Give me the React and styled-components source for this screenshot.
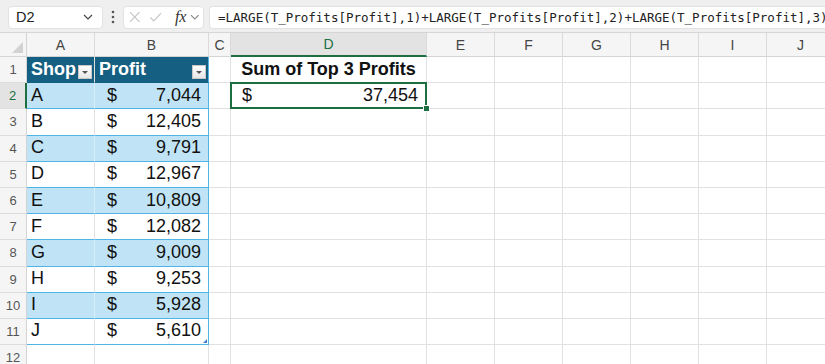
import React from "react";
import styled, { createGlobalStyle, css } from "styled-components";

const GlobalStyle = createGlobalStyle`
  html, body {
    margin: 0;
    padding: 0;
    background: #ffffff;
    overflow: hidden;
  }
  body {
    font-family: "Liberation Sans", Arial, sans-serif;
  }
`;

const GREEN = "#1d6f42";
const BLUE_LINE = "#4fb5e6";
const BAND = "#c0e4f5";
const HEAD = "#156082";
const GRID = "#e1e1e1";

const rows = [
  ["A", "7,044"],
  ["B", "12,405"],
  ["C", "9,791"],
  ["D", "12,967"],
  ["E", "10,809"],
  ["F", "12,082"],
  ["G", "9,009"],
  ["H", "9,253"],
  ["I", "5,928"],
  ["J", "5,610"],
];

const letters = ["A", "B", "C", "D", "E", "F", "G", "H", "I", "J"];

const App = () => {
  return (
    <Page>
      <GlobalStyle />
      <FormulaBar>
        <NameBox>
          <span>D2</span>
          <Chevron />
        </NameBox>
        <Dots>
          <svg width="4" height="14" viewBox="0 0 4 14">
            <circle cx="2" cy="2" r="1.3" fill="#555" />
            <circle cx="2" cy="7" r="1.3" fill="#555" />
            <circle cx="2" cy="12" r="1.3" fill="#555" />
          </svg>
        </Dots>
        <FnBox>
          <svg width="14" height="14" viewBox="0 0 14 14">
            <path d="M2 2 L12 12 M12 2 L2 12" stroke="#c4c4c4" strokeWidth="1.2" fill="none" />
          </svg>
          <svg width="14" height="14" viewBox="0 0 14 14">
            <path d="M1.5 7.5 L5 11 L12.5 3" stroke="#c4c4c4" strokeWidth="1.2" fill="none" />
          </svg>
          <Fx>fx</Fx>
          <Chevron light />
        </FnBox>
        <FormulaInput>
          =LARGE(T_Profits[Profit],1)+LARGE(T_Profits[Profit],2)+LARGE(T_Profits[Profit],3)
        </FormulaInput>
      </FormulaBar>

      <Sheet>
        <Corner>
          <CornerTri />
        </Corner>
        {letters.map((l) => (
          <ColHead key={l} $active={l === "D"}>
            {l}
          </ColHead>
        ))}

        {/* row 1 */}
        <RowHead>1</RowHead>
        <TCell $head>
          <HeadText>Shop</HeadText>
          <FilterBtn />
        </TCell>
        <TCell $head $right>
          <HeadText>Profit</HeadText>
          <FilterBtn />
        </TCell>
        <Cell />
        <Cell $center>
          <Bold>Sum of Top 3 Profits</Bold>
        </Cell>
        {[...Array(6)].map((_, i) => (
          <Cell key={i} />
        ))}

        {rows.map((r, idx) => {
          const n = idx + 2;
          const band = idx % 2 === 0;
          const last = idx === rows.length - 1;
          return (
            <React.Fragment key={n}>
              <RowHead $active={n === 2}>{n}</RowHead>
              <TCell $band={band} $split>
                {r[0]}
              </TCell>
              <TCell $band={band} $right $acct>
                <span>$</span>
                <span>{r[1]}</span>
                {last && <ResizeHandle />}
              </TCell>
              <Cell />
              {n === 2 ? (
                <Selected $acct>
                  <span>$</span>
                  <span>37,454</span>
                  <FillHandle />
                </Selected>
              ) : (
                <Cell />
              )}
              {[...Array(6)].map((_, i) => (
                <Cell key={i} />
              ))}
            </React.Fragment>
          );
        })}

        <RowHead>12</RowHead>
        {[...Array(10)].map((_, i) => (
          <Cell key={i} />
        ))}
      </Sheet>
    </Page>
  );
};

const Chevron = ({ light }) => (
  <svg width="10" height="6" viewBox="0 0 10 6">
    <path
      d="M1 1 L5 5 L9 1"
      stroke={light ? "#8a8a8a" : "#444"}
      strokeWidth="1.2"
      fill="none"
    />
  </svg>
);

export default App;

const Page = styled.div`
  width: 825px;
  height: 364px;
  overflow: hidden;
  background: #ffffff;
`;

const FormulaBar = styled.div`
  display: flex;
  align-items: center;
  height: 33px;
  box-sizing: border-box;
  padding: 4px 0 2px 8px;
  background: #efefef;
  border-bottom: 1px solid #d6d6d6;
`;

const boxBase = css`
  height: 23px;
  box-sizing: border-box;
  background: #ffffff;
  border: 1px solid #e2e2e2;
  border-radius: 4px;
  display: flex;
  align-items: center;
`;

const NameBox = styled.div`
  ${boxBase};
  width: 95px;
  justify-content: space-between;
  padding: 0 9px 0 7px;
  font-size: 14.5px;
  color: #222;
`;

const Dots = styled.div`
  width: 20px;
  display: flex;
  justify-content: center;
`;

const FnBox = styled.div`
  ${boxBase};
  width: 81px;
  gap: 8px;
  padding: 0 3px 0 4px;
  svg:last-child {
    margin-left: -4px;
  }
`;

const Fx = styled.span`
  font-family: "Liberation Serif", "Times New Roman", serif;
  font-style: italic;
  font-size: 16px;
  color: #333;
  margin-left: 4px;
`;

const FormulaInput = styled.div`
  ${boxBase};
  flex: 1;
  margin-left: 5px;
  border-radius: 4px 0 0 4px;
  border-right: none;
  padding-left: 8px;
  white-space: nowrap;
  overflow: hidden;
  font-family: "DejaVu Sans Mono", "Liberation Mono", monospace;
  font-size: 12.5px;
  color: #222;
`;

const Sheet = styled.div`
  display: grid;
  grid-template-columns: 27px 68px 114px 22px 196px repeat(6, 68px);
  grid-template-rows: 24px repeat(12, 26.2px);
`;

const Corner = styled.div`
  position: relative;
  background: #f5f5f5;
  border-right: 1px solid #d4d4d4;
  border-bottom: 1px solid #d4d4d4;
`;

const CornerTri = styled.div`
  position: absolute;
  right: 3px;
  bottom: 3px;
  width: 0;
  height: 0;
  border-left: 11px solid transparent;
  border-bottom: 11px solid #d2d2d2;
`;

const ColHead = styled.div`
  display: flex;
  align-items: center;
  justify-content: center;
  box-sizing: border-box;
  font-size: 14px;
  color: #454545;
  background: ${(p) => (p.$active ? "#e3e3e3" : "#f5f5f5")};
  border-right: 1px solid #dadada;
  border-bottom: ${(p) => (p.$active ? `2px solid ${GREEN}` : "1px solid #d4d4d4")};
  ${(p) =>
    p.$active &&
    css`
      color: ${GREEN};
    `}
`;

const RowHead = styled.div`
  display: flex;
  align-items: center;
  justify-content: center;
  box-sizing: border-box;
  font-size: 13px;
  color: ${(p) => (p.$active ? GREEN : "#555")};
  background: ${(p) => (p.$active ? "#e3e3e3" : "#f5f5f5")};
  border-right: ${(p) => (p.$active ? `2px solid ${GREEN}` : "1px solid #d4d4d4")};
  border-bottom: 1px solid #dcdcdc;
`;

const Cell = styled.div`
  position: relative;
  display: flex;
  align-items: center;
  box-sizing: border-box;
  font-size: 18px;
  color: #111;
  border-right: 1px solid ${GRID};
  border-bottom: 1px solid ${GRID};
  justify-content: ${(p) => (p.$center ? "center" : "flex-start")};
  white-space: nowrap;
`;

const TCell = styled(Cell)`
  padding: 0 7px 1px 4px;
  background: ${(p) => (p.$head ? HEAD : p.$band ? BAND : "#ffffff")};
  color: ${(p) => (p.$head ? "#ffffff" : "#111")};
  border-bottom: 1px solid ${(p) => (p.$head ? HEAD : BLUE_LINE)};
  border-right: 1px solid
    ${(p) => (p.$right ? BLUE_LINE : p.$band ? "#d8eef8" : GRID)};
  ${(p) =>
    p.$head &&
    css`
      justify-content: space-between;
      padding: 0 2px 0 4px;
    `}
  ${(p) =>
    p.$acct &&
    css`
      justify-content: space-between;
      padding-left: 12px;
    `}
`;

const HeadText = styled.span`
  font-weight: bold;
`;

const Bold = styled.span`
  font-weight: bold;
`;

const FilterBtn = styled.span`
  position: relative;
  width: 14px;
  height: 14px;
  box-sizing: border-box;
  background: linear-gradient(#ffffff, #e6e6e6);
  border: 1px solid #c8c8c8;
  margin-top: 4px;
  &::after {
    content: "";
    position: absolute;
    left: 3px;
    top: 5px;
    border-left: 3px solid transparent;
    border-right: 3px solid transparent;
    border-top: 3px solid #555;
  }
`;

const ResizeHandle = styled.span`
  position: absolute;
  right: 1px;
  bottom: 1px;
  width: 0;
  height: 0;
  border-left: 4px solid transparent;
  border-bottom: 4px solid #3d7fc4;
`;

const Selected = styled(Cell)`
  justify-content: space-between;
  padding: 0 8px 1px 11px;
  &::before {
    content: "";
    position: absolute;
    left: -1px;
    top: -1px;
    right: -1px;
    bottom: -1px;
    border: 2px solid ${GREEN};
    pointer-events: none;
  }
`;

const FillHandle = styled.span`
  position: absolute;
  right: -4px;
  bottom: -4px;
  width: 5px;
  height: 5px;
  background: ${GREEN};
  border: 1px solid #ffffff;
  z-index: 2;
`;
